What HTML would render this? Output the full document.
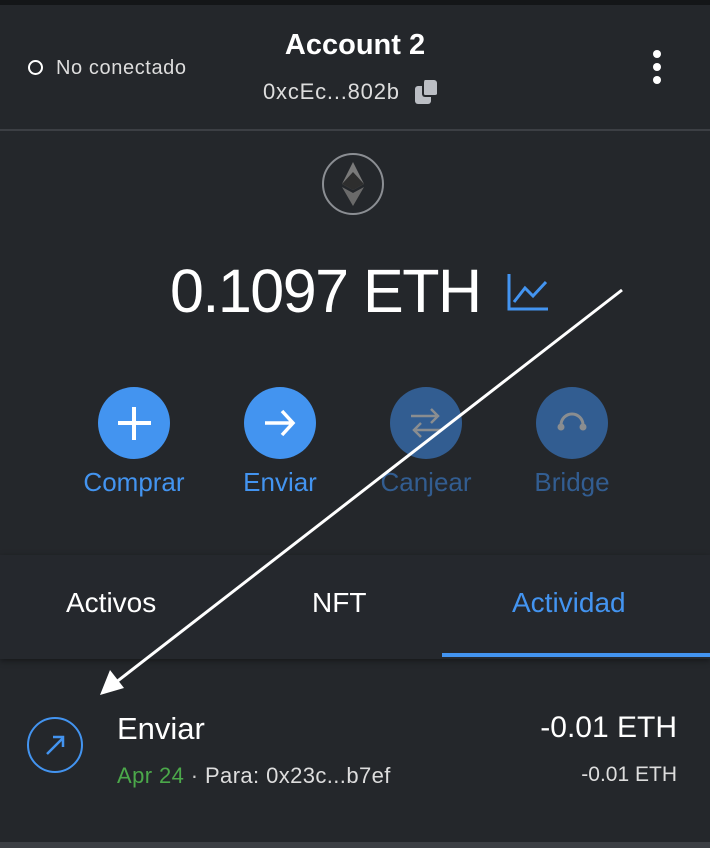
<!DOCTYPE html>
<html><head><meta charset="utf-8"><style>
*{margin:0;padding:0;box-sizing:border-box}
body{width:710px;height:848px;background:#24272b;font-family:"Liberation Sans",sans-serif;position:relative;overflow:hidden;color:#fff}
.a{position:absolute;white-space:nowrap}
.c{position:absolute;width:72px;height:72px;border-radius:50%;top:387px}
.lbl{position:absolute;top:467px;font-size:26px;text-align:center;width:160px}
</style></head><body>
<div class="a" style="left:0;top:0;width:710px;height:5px;background:#141618"></div>
<div class="a" style="left:28px;top:60px;width:15px;height:15px;border:2px solid #fff;border-radius:50%"></div>
<div class="a" style="left:56px;top:57px;font-size:20px;color:#ddd;letter-spacing:0.6px">No conectado</div>
<div class="a" style="left:0;width:710px;text-align:center;top:29px;font-size:29px;font-weight:bold">Account 2</div>
<div class="a" style="left:263px;top:79px;font-size:22px;color:#ddd;letter-spacing:0.8px">0xcEc...802b</div>
<div class="a" style="left:415px;top:86px;width:16px;height:18px;background:#bbbec4;border-radius:3px"></div>
<div class="a" style="left:422px;top:80px;width:15px;height:17px;background:#bbbec4;border-radius:3px;border-left:2px solid #24272b;border-bottom:2px solid #24272b"></div>
<div class="a" style="left:653px;top:50px;width:8px;height:8px;background:#fff;border-radius:50%"></div>
<div class="a" style="left:653px;top:63px;width:8px;height:8px;background:#fff;border-radius:50%"></div>
<div class="a" style="left:653px;top:76px;width:8px;height:8px;background:#fff;border-radius:50%"></div>
<div class="a" style="left:0;top:129px;width:710px;height:2px;background:#3c3f44"></div>
<svg class="a" style="left:320px;top:152px" width="66" height="64"><circle cx="33" cy="32" r="30" fill="none" stroke="#8b8e93" stroke-width="2"/><path d="M33 10L22 32L33 38L44 32Z" fill="#7a7a7a"/><path d="M33 20L22 32L33 38L44 32Z" fill="#2e2e2e"/><path d="M22 35L33 41L44 35L33 54Z" fill="#6a6a6a"/></svg>
<div class="a" style="left:170px;top:256px;font-size:61px;letter-spacing:-1.5px">0.1097 ETH</div>
<svg class="a" style="left:506px;top:272px" width="44" height="40"><path d="M3 2V37H42" fill="none" stroke="#4394f0" stroke-width="3"/><path d="M8 30L19 16L27 24L40 10" fill="none" stroke="#4394f0" stroke-width="3"/></svg>
<div class="c" style="left:98px;background:#4394f0"></div>
<div class="a" style="left:118px;top:421px;width:33px;height:4px;background:#fff"></div>
<div class="a" style="left:132px;top:407px;width:4px;height:33px;background:#fff"></div>
<div class="c" style="left:244px;background:#4394f0"></div>
<svg class="a" style="left:262px;top:405px" width="36" height="36"><path d="M3 18H31M20 6L31 18L20 30" fill="none" stroke="#fff" stroke-width="3.5"/></svg>
<div class="c" style="left:390px;background:#325d91"></div>
<svg class="a" style="left:408px;top:405px" width="36" height="36"><path d="M3 11H30M23 4L30 11L23 18M33 25H6M13 18L6 25L13 32" fill="none" stroke="#8a8d90" stroke-width="2.5"/></svg>
<div class="c" style="left:536px;background:#325d91"></div>
<svg class="a" style="left:554px;top:405px" width="36" height="36"><path d="M7 20A11 11 0 0 1 29 20" fill="none" stroke="#8a8d90" stroke-width="3"/><circle cx="7" cy="22" r="3.5" fill="#8a8d90"/><circle cx="29" cy="22" r="3.5" fill="#8a8d90"/></svg>
<div class="lbl" style="left:54px;color:#4394f0">Comprar</div>
<div class="lbl" style="left:200px;color:#4394f0">Enviar</div>
<div class="lbl" style="left:346px;color:#325d91">Canjear</div>
<div class="lbl" style="left:492px;color:#325d91">Bridge</div>
<div class="a" style="left:0;top:555px;width:710px;height:104px;background:#25282d;box-shadow:0 2px 6px rgba(0,0,0,.4)"></div>
<div class="a" style="left:66px;top:587px;font-size:28px">Activos</div>
<div class="a" style="left:312px;top:587px;font-size:28px">NFT</div>
<div class="a" style="left:512px;top:587px;font-size:28px;color:#4394f0">Actividad</div>
<div class="a" style="left:442px;top:653px;width:268px;height:4px;background:#4394f0"></div>
<svg class="a" style="left:26px;top:716px" width="60" height="60"><circle cx="29" cy="29" r="27" fill="none" stroke="#4394f0" stroke-width="2"/><path d="M21 38L37 22M27 21H37V31" fill="none" stroke="#4394f0" stroke-width="2.5"/></svg>
<div class="a" style="left:117px;top:711px;font-size:31px">Enviar</div>
<div class="a" style="left:117px;top:763px;font-size:22px;color:#4ba84a;letter-spacing:0.4px">Apr 24 <span style="color:#ccc">·</span> <span style="color:#ddd">Para: 0x23c...b7ef</span></div>
<div class="a" style="right:33px;top:711px;font-size:30px">-0.01 ETH</div>
<div class="a" style="right:33px;top:763px;font-size:21px;color:#ddd">-0.01 ETH</div>
<div class="a" style="left:0;top:842px;width:710px;height:6px;background:#3c3f44"></div>
<svg class="a" style="left:0;top:0" width="710" height="848"><line x1="622" y1="290" x2="115" y2="683" stroke="#fff" stroke-width="3"/><path d="M100 695L110 670L124 688Z" fill="#fff"/></svg>
</body></html>
